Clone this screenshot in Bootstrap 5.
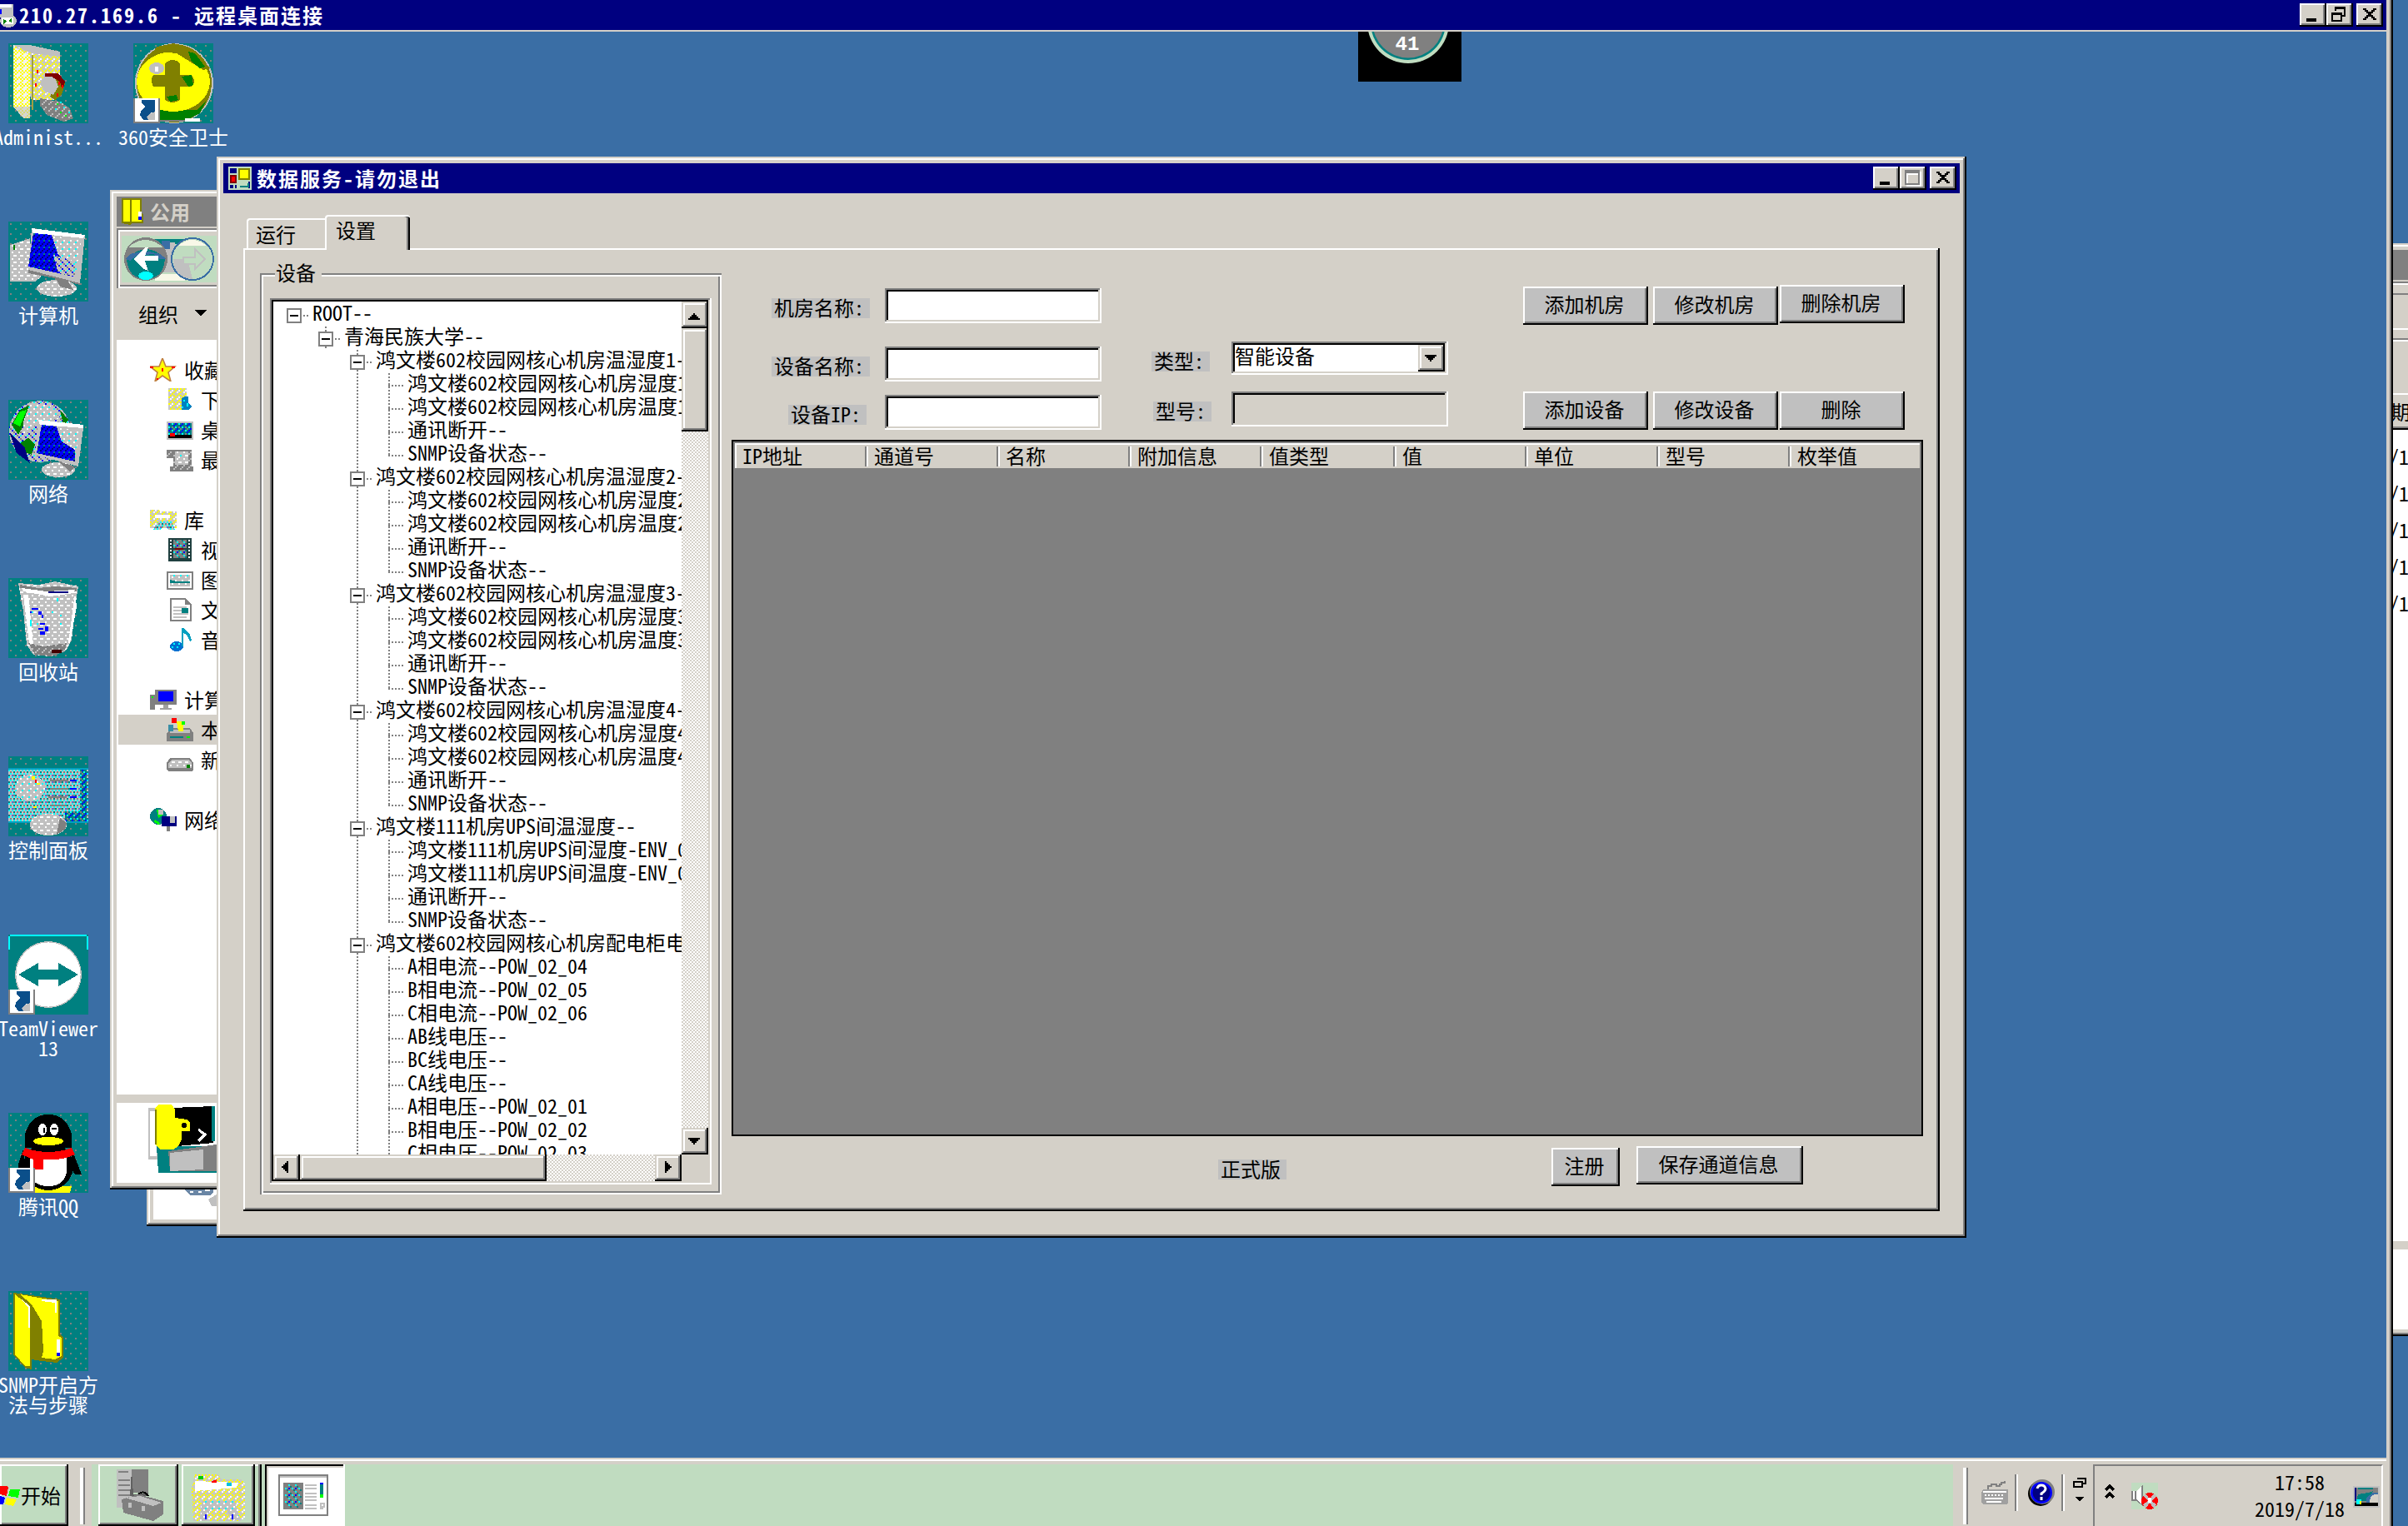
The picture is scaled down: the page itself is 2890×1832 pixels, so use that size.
<!DOCTYPE html>
<html lang="zh-CN">
<head>
<meta charset="utf-8">
<title>210.27.169.6 - 远程桌面连接</title>
<link rel="stylesheet" href="https://cdn.jsdelivr.net/npm/bootstrap@5.3.0/dist/css/bootstrap.min.css">
<script src="https://cdn.jsdelivr.net/npm/bootstrap@5.3.0/dist/js/bootstrap.bundle.min.js"></script>
<style>
:root{--face:#d4d0c8;--desk:#3a6ea5;--navy:#000080;--gr:#808080;--mint:#c0dcc0}
html,body{width:2890px;height:1832px;overflow:hidden}
body{background:var(--desk);color:#000;font:24px/24px "Noto Sans CJK SC",sans-serif;font-feature-settings:"hwid";position:relative}
svg{display:block;flex:none}
.px{shape-rendering:crispEdges}
.abs{position:absolute}
.clip{overflow:hidden;white-space:nowrap}
.face{background:var(--face)}
/* classic 3D edges */
.e-win{background:var(--face);box-shadow:inset -2px -2px #000,inset 2px 2px var(--face),inset -4px -4px var(--gr),inset 4px 4px #fff}
.e-btn{background:var(--face);box-shadow:inset -2px -2px #000,inset 2px 2px #fff,inset -4px -4px var(--gr);border:0;border-radius:0;padding:0;font:inherit;color:#000;line-height:24px}
.e-sb{background:var(--face);box-shadow:inset -2px -2px #000,inset 2px 2px var(--face),inset -4px -4px var(--gr),inset 4px 4px #fff}
.e-sunk{background:#fff;box-shadow:inset -2px -2px #fff,inset 2px 2px var(--gr),inset -4px -4px var(--face),inset 4px 4px #000}
.tbar{background:var(--navy);color:#fff;font-weight:700;letter-spacing:2px;height:36px}
.capbtn{width:32px;height:28px}
/* remote frame */
.frame{width:2872px;height:1832px;background:var(--desk);border-right:2px solid #000;box-shadow:inset -2px 0 var(--gr);padding-right:2px;position:relative;z-index:1}
.framein{border-right:4px solid var(--face);height:1832px}
.topbar{border-bottom:2px solid var(--face);height:38px;padding:0 4px 0 0;flex:none}
.deskarea{min-height:0;padding:14px 0 0 10px}
.dicon{width:96px;color:#fff;text-align:center;height:214px;flex:none}
.dicon div{margin:4px -30px 0;line-height:24px;white-space:nowrap}
/* stray window at the far right */
.stray{left:2872px;top:292px;width:18px;height:1312px}
.stray .ln{height:44px;line-height:44px;margin-left:-5px}
/* explorer */
.exp{left:132px;top:228px;width:300px;height:1200px;padding:8px}
.navbox{height:72px;margin-top:2px;padding:6px;box-shadow:inset 2px 2px var(--gr),inset 4px 4px #fff,inset 0 -2px #fff,inset 0 -4px var(--gr)}
.li1,.li2{height:36px;display:flex;align-items:center;padding-left:40px;line-height:22px}
.li1 svg,.li2 svg{width:32px;height:28px;margin-right:9px}
.li2{padding-left:60px}
.li2.sel{background:var(--face);margin-left:2px;padding-left:58px}
/* service window */
.svc{left:260px;top:188px;width:2100px;height:1298px;padding:8px}
.tab1{width:94px;height:36px;margin-left:4px;border:2px solid #fff;border-bottom:0;border-radius:4px 0 0 0;padding:5px 0 0 9px;border-right:0}
.tab2{width:102px;height:42px;margin-bottom:-2px;background:var(--face);border-left:2px solid #fff;border-top:2px solid #fff;border-radius:4px 4px 0 0;box-shadow:inset -2px 0 #000,inset -4px 0 var(--gr);padding:4px 0 0 11px;position:relative}
.tpage{width:2036px;height:1156px;box-shadow:inset -2px -2px #000,inset 2px 2px #fff,inset -4px -4px var(--gr)}
.gbox{width:554px;height:1106px;margin:30px 0 0 20px;padding:0 12px;box-shadow:inset 2px 2px var(--gr),inset -2px -2px #fff,inset 4px 4px #fff,inset -4px -4px var(--gr)}
.glabel{width:56px;height:24px;margin:-12px 0 18px 6px;padding-left:1px;line-height:22px;background:var(--face)}
.tree{width:530px;height:1064px;padding:4px}
.rows{width:490px;height:1024px;overflow:hidden;padding-top:2px;background:#fff}
.r{height:28px;display:flex;white-space:nowrap;line-height:22px;position:relative}
.r1{padding-left:38px;background:linear-gradient(var(--gr) 50%,transparent 50%) 62px 0/2px 4px repeat-y}
.r2{padding-left:76px}.r3{padding-left:138px}
.r2,.r3{background:linear-gradient(var(--gr) 50%,transparent 50%) 100px 0/2px 4px repeat-y}
.bx{width:18px;height:18px;border:2px solid var(--gr);margin:6px 0 0 16px;background:linear-gradient(#000,#000) center/10px 2px no-repeat #fff;flex:none}
.dt{width:6px;height:2px;margin:14px 5px 0 2px;background:linear-gradient(90deg,var(--gr) 50%,transparent 50%) 0 0/4px 2px;flex:none}
.arm{width:18px;height:28px;margin-right:5px;flex:none;background:linear-gradient(var(--gr) 50%,transparent 50%) 0 0/2px 4px repeat-y}
.arm::after{content:"";display:block;margin-top:14px;height:2px;width:18px;background:linear-gradient(90deg,var(--gr) 50%,transparent 50%) 0 0/4px 2px}
.end .arm{height:16px}
.dith{background:repeating-conic-gradient(#fff 0 25%,var(--face) 0 50%) 0 0/4px 4px}
.s32{width:32px;height:32px}
.fl{background:#c0c0c0;height:24px;padding-left:3px;line-height:22px;white-space:nowrap}
.fin{width:260px;height:42px;border:0;border-radius:0}
.bt{background:#c0c0c0;width:150px;height:46px;padding:0 3px 4px 0}
.dgrid{width:1430px;height:836px;background:var(--gr);border:2px solid #000;padding:2px 0 0 2px}
.dhead{width:1422px;height:30px;background:var(--face);box-shadow:inset 2px 2px #fff}
.dhead div{width:158px;height:24px;margin-top:4px;line-height:22px;padding-left:9px;position:relative;box-shadow:inset -2px 0 var(--gr),2px 0 #fff}
.dhead div:nth-child(5){width:160px}
.dhead div:last-child{box-shadow:none;width:156px}
/* taskbar */
.task{height:82px;flex:none;background:var(--face);box-shadow:inset 0 2px var(--face),inset 0 4px #fff;padding-top:8px;padding-right:4px}
.tb{background:var(--mint);height:74px}
.grip{width:6px;height:68px;background:#fff;border-right:2px solid var(--gr);margin-top:4px}
.sep{width:4px;height:44px;border-left:2px solid var(--gr);border-right:2px solid #fff;margin-top:12px}
.tray{width:348px;height:74px;border-top:2px solid var(--gr);border-left:2px solid var(--gr);border-right:2px solid #fff}
.clock{width:108px;padding-top:3px;margin-right:10px;line-height:32px}
</style>
</head>
<body>
<svg width="0" height="0" class="abs"><defs>
<pattern id="tl" width="6" height="6" patternUnits="userSpaceOnUse"><rect width="6" height="6" fill="#008080"/><rect x="1" y="1" width="1" height="1" fill="#808080"/><rect x="4" y="4" width="1" height="1" fill="#808080"/></pattern>
<pattern id="yw" width="4" height="4" patternUnits="userSpaceOnUse"><rect width="4" height="4" fill="#f4f4ec"/><path d="M0 0h1v1H0zM2 0h1v1H2zM1 1h1v1H1zM3 1h1v1H3zM0 2h1v1H0zM3 3h1v1H3z" fill="#ff0"/></pattern>
<pattern id="ys" width="4" height="4" patternUnits="userSpaceOnUse"><rect width="4" height="4" fill="#c8c8c4"/><path d="M0 0h1v1H0zM2 0h1v1H2zM1 1h1v1H1zM0 2h1v1H0zM3 3h1v1H3z" fill="#ff0"/><path d="M2 2h1v1H2zM3 1h1v1H3z" fill="#fff"/></pattern>
<pattern id="ws" width="4" height="4" patternUnits="userSpaceOnUse"><rect width="4" height="4" fill="#c0c0c0"/><path d="M0 0h1v1H0zM2 2h1v1H2zM3 0h1v1H3z" fill="#fff"/></pattern>
<pattern id="bn" width="3" height="4" patternUnits="userSpaceOnUse"><rect width="3" height="4" fill="#00f"/><path d="M0 0h1v1H0zM2 1h1v1H2zM1 2h1v1H1z" fill="#000080"/><path d="M0 3h1v1H0z" fill="#008080"/></pattern>
<pattern id="cs" width="4" height="4" patternUnits="userSpaceOnUse"><rect width="4" height="4" fill="#c0c0c0"/><path d="M0 0h1v1H0z" fill="#0ff"/><path d="M1 3h1v1H1zM3 1h1v1H3z" fill="#fff"/></pattern>
<pattern id="cb" width="4" height="4" patternUnits="userSpaceOnUse"><rect width="4" height="4" fill="#c0c0c0"/><path d="M0 0h1v1H0zM2 2h1v1H2z" fill="#00f"/><path d="M1 1h1v1H1zM3 3h1v1H3z" fill="#808080"/><path d="M3 1h1v1H3z" fill="#0ff"/></pattern>
<pattern id="tc" width="4" height="4" patternUnits="userSpaceOnUse"><rect width="4" height="4" fill="#808080"/><path d="M0 0h1v1H0zM2 2h1v1H2z" fill="#0ff"/><path d="M1 1h1v1H1zM3 3h1v1H3z" fill="#008080"/><path d="M2 0h1v1H2z" fill="#00f"/></pattern>
<pattern id="cp" width="4" height="4" patternUnits="userSpaceOnUse"><rect width="4" height="4" fill="#c0c0c0"/><path d="M0 0h1v1H0zM2 0h1v1H2zM1 2h1v1H1zM3 2h1v1H3z" fill="#0ff"/><path d="M1 1h1v1H1zM3 3h1v1H3z" fill="#808080"/><path d="M3 1h1v1H3zM0 3h1v1H0z" fill="#008080"/><path d="M2 3h1v1H2z" fill="#66c"/></pattern>
<pattern id="bd" width="4" height="4" patternUnits="userSpaceOnUse"><rect width="4" height="4" fill="#008080"/><path d="M0 0h1v1H0zM2 2h1v1H2zM1 3h1v1H1z" fill="#00f"/><path d="M1 1h1v1H1zM3 3h1v1H3z" fill="#0ff"/><path d="M3 1h1v1H3zM0 2h1v1H0z" fill="#808080"/></pattern>
<pattern id="gd" width="4" height="4" patternUnits="userSpaceOnUse"><rect width="4" height="4" fill="#808080"/><path d="M0 0h1v1H0zM2 2h1v1H2zM1 3h1v1H1z" fill="#c0c0c0"/></pattern>
<g id="cut"><rect y="33" width="16" height="15" fill="#808080"/><rect x="1" y="33" width="14" height="14" fill="#fff"/><path d="M5 34h8v8h-2v-1l-2 2 0 3H6l-2-3 1-3 2-2-2-2z" fill="#0b4f8a"/><path d="M13 41l-3 1-2 2 1 2h4z" fill="#c0c0c0"/></g>
</defs></svg>

<!-- window of the local desktop, seen past the remote frame -->
<div class="abs stray face clip">
  <div style="height:8px;border-top:2px solid var(--face);box-shadow:inset 0 2px #fff"></div>
  <div style="height:36px;background:var(--gr)"></div>
  <div style="height:16px;background:linear-gradient(var(--face) 2px,var(--gr) 2px 4px,#fff 4px 6px,var(--face) 6px)"></div>
  <div style="height:58px;background:linear-gradient(var(--gr) 2px,var(--face) 2px 42px,#fff 42px 44px,var(--face) 44px 54px,var(--gr) 54px 56px,#fff 56px)"></div>
  <div style="height:62px"></div>
  <div style="height:44px;border-top:2px solid #fff;box-shadow:inset 0 -2px #000,inset 0 -4px var(--gr);padding-top:8px"><span style="margin-left:-3px">期</span></div>
  <div class="bg-white" style="height:974px;padding-top:10px"><div class="ln">/1</div><div class="ln">/1</div><div class="ln">/1</div><div class="ln">/1</div><div class="ln">/1</div></div>
  <div style="height:10px"></div>
  <div class="bg-white" style="height:96px"></div>
  <div style="height:8px;box-shadow:inset 0 -2px #000,inset 0 -4px var(--gr)"></div>
</div>

<div class="frame"><div class="framein d-flex flex-column">
  <header class="tbar topbar d-flex align-items-center">
    <svg class="px" width="20" height="30" viewBox="0 0 10 15"><path d="M0 1h8v8H0z" fill="#c0c0c0"/><path d="M0 1h7v2H0z" fill="#fff"/><path d="M0 4h1v3H0z" fill="#00f"/><ellipse cx="5" cy="11" rx="5" ry="4" fill="#c0c0c0"/><path d="M1 9h7v4H1z" fill="#fff"/><path d="M2 10l2 1-2 2zM7 9L5 11l2 1z" fill="#008000"/></svg>
    <span style="margin-left:3px">210.27.169.6 - 远程桌面连接</span>
    <div class="ms-auto d-flex">
      <div class="e-btn capbtn"><svg class="px" width="32" height="28"><path d="M8 18h12v4H8z"/></svg></div>
      <div class="e-btn capbtn"><svg class="px" width="32" height="28" fill="none" stroke="#000" stroke-width="2"><path d="M11 9V6h11v9h-4M11 4v4M10 5h13"/><path d="M7 12h11v9H7zM6 13h13"/></svg></div>
      <div class="e-btn capbtn ms-1"><svg class="px" width="32" height="28"><path d="M8 6h4v2h2v2h4V8h2V6h4v2h-2v2h-2v2h-2v2h2v2h2v2h2v2h-4v-2h-2v-2h-4v2h-2v2H8v-2h2v-2h2v-2h2v-2h-2v-2h-2V8H8z"/></svg></div>
    </div>
  </header>

  <main class="flex-grow-1 d-flex deskarea">
    <section class="d-flex flex-column" style="width:150px">
      <div class="dicon">
        <svg class="px" width="96" height="96" viewBox="0 0 48 48"><rect width="48" height="48" fill="url(#tl)"/><path d="M3 1L31 5V22L28 34H14z" fill="url(#ys)"/><path d="M3 1h10l18 4v3L14 6z" fill="#c0c0c0"/><path d="M3 2L13 7V45L9 45 3 38z" fill="url(#yw)"/><path d="M14 7h1v33h-1z" fill="#a0a040"/><path d="M3 38l6 7h4v-7z" fill="#c0c0c0" opacity=".6"/><path d="M25 18l6 1 3 5-2 7-4 3-3-2 4-7-4-5z" fill="#808000"/><path d="M22 19l6 1 2 6-3 5-5-2-3-5z" fill="#c0c0c0"/><path d="M22 18l8 0 4 5-1 4-1 0-1-4-5-3h-4z" fill="#800000"/><path d="M30 23h1v2h-1zM32 25h1v2h-1zM29 30h1v2h-1zM17 16h1v2h-1zM16 24h1v2h-1z" fill="red"/><path d="M19 33l5 1 7 1 6 4 2 6-6 2-10-4-4-6z" fill="url(#gd)"/><path d="M31 35h1v1h-1zM33 38h1v1h-1zM36 41h1v1h-1zM28 39h1v1h-1z" fill="#0ff"/><path d="M29 36h1v1h-1zM34 43h1v1h-1zM31 41h1v1h-1z" fill="#0f0"/></svg>
        <div>Administ...</div></div>
      <div class="dicon">
        <svg class="px" width="96" height="96" viewBox="0 0 48 48"><rect width="48" height="48" fill="url(#tl)"/><path d="M1 14L13 10V28l7 5-4 3H1z" fill="url(#ws)"/><path d="M3 14h1v3H3z" fill="#008000"/><path d="M14 4L46 8 43 37 12 29z" fill="#c0c0c0"/><path d="M14 4L46 8l-1 2-30-3z" fill="#fff"/><path d="M15 7L44 11 40 33 12 27z" fill="url(#cs)"/><path d="M15 7l11 1 4 12 10 8-1 5-27-6z" fill="url(#bn)"/><path d="M27 20l13 4v9l-10-2z" fill="url(#cb)"/><path d="M12 29l31 8v1L28 34 12 31z" fill="#808080"/><ellipse cx="29" cy="40" rx="12" ry="5" fill="url(#ws)"/><path d="M28 33l8 3 3 5-8-2z" fill="#808080"/></svg>
        <div>计算机</div></div>
      <div class="dicon">
        <svg class="px" width="96" height="96" viewBox="0 0 48 48"><rect width="48" height="48" fill="url(#tl)"/><circle cx="19" cy="19" r="18.500" fill="url(#cb)"/><path d="M2 15l5-9 8-4-4 10-5 9zM7 26l5-3 4 4-2 6-6-2zM31 6l5 6-3 3z" fill="#008000"/><path d="M3 14l4-7 4-1-4 10z" fill="#0f0"/><path d="M1 20l4 12 8 6-3-9-5-5z" fill="#000080"/><path d="M13 2l12 1 6 8-14 3-8 8 0-9z" fill="url(#cs)"/><path d="M18 12L45 17 42 40 16 33z" fill="#c0c0c0"/><path d="M18 12l27 3v2L19 15z" fill="#fff"/><path d="M20 15L43 19 40 36 17 31z" fill="url(#cs)"/><path d="M20 15l9 1 3 9 8 5v7l-23-5z" fill="url(#bn)"/><ellipse cx="30" cy="42" rx="10" ry="4.500" fill="url(#ws)"/><path d="M30 37l10 3-3 3z" fill="#808080"/></svg>
        <div>网络</div></div>
      <div class="dicon">
        <svg class="px" width="96" height="96" viewBox="0 0 48 48"><rect width="48" height="48" fill="url(#tl)"/><path d="M6 3l12 1 10-2 14 3-1 6-3 26-3 6-10 4-10-1-4-6L9 20z" fill="url(#ws)"/><path d="M7 4l11 2 10-1 13 1v2l-14 1L7 6z" fill="#808080"/><path d="M8 6l15 2 17-1-1 2-14 2L9 8z" fill="#fff"/><path d="M24 8h12v1H24z" fill="#000080"/><path d="M9 10l3 25 1 6 2-1L12 10zM40 9l-4 30h1l4-22z" fill="#fff"/><path d="M14 18h4v1h-4zM13 20h1v1h-1zM18 20h2v2h-2zM20 22h1v2h-1zM19 27h3v1h-3zM18 30h3v1h-3zM22 29h2v3h-2zM19 32h3v2h-3z" fill="#00f"/><path d="M14 20h1v1h-1zM13 25h1v4h-1zM17 27h1v1h-1zM29 12h1v2h-1zM26 20h1v1h-1zM31 27h1v1h-1zM31 22h1v1h-1z" fill="#0ff"/><path d="M12 39l9 2 14-2-1 5-8 3-10-1z" fill="url(#gd)"/><path d="M26 43h6v2h-6z" fill="#400"/></svg>
        <div>回收站</div></div>
      <div class="dicon">
        <svg class="px" width="96" height="96" viewBox="0 0 48 48"><rect width="48" height="48" fill="url(#tl)"/><path d="M0 7h48v33H0z" fill="url(#cp)"/><path d="M0 7h48v1H0zM0 39h48v1H0z" fill="#00a0c0"/><path d="M43 8h4v31H34v-6h9z" fill="url(#bd)"/><ellipse cx="13" cy="19" rx="9" ry="8" fill="url(#cs)"/><path d="M25 14h11v1H25zM25 19h11v1H25zM24 24h11v1H24zM25 29h10v1H25z" fill="#808080"/><path d="M37 14h4v1h-4zM37 19h4v1h-4zM37 24h4v1h-4z" fill="#00f"/><path d="M14 12h2v2h-2zM17 16h2v1h-2zM15 30h2v1h-2z" fill="#ff0"/><path d="M16 14h1v2h-1z" fill="red"/><ellipse cx="24" cy="41" rx="11" ry="6.500" fill="url(#ws)"/><path d="M31 37l4 3-1 4-5 3z" fill="#808080"/></svg>
        <div>控制面板</div></div>
      <div class="dicon">
        <svg class="px" width="96" height="96" viewBox="0 0 48 48"><rect width="48" height="48" fill="#008080"/><path d="M1 0h46v1H1zM0 1h1v8H0zM47 1h1v8h-1z" fill="#0ff"/><circle cx="24" cy="24" r="20" fill="#c0c0c0"/><circle cx="24" cy="24" r="19.300" fill="#fff"/><path d="M6 24l12-7v4h12v-4l12 7-12 7v-4H18v4z" fill="#008080"/><use href="#cut"/></svg>
        <div>TeamViewer<br>13</div></div>
      <div class="dicon">
        <svg class="px" width="96" height="96" viewBox="0 0 48 48"><rect width="48" height="48" fill="url(#tl)"/><path d="M14 44h24l-1 4H15z" fill="#ff0"/><path d="M9 22l-3 9v5l4-3zM39 24l5 13-4 0-4-6z" fill="#000"/><ellipse cx="24" cy="32" rx="15" ry="14.500" fill="#000"/><path d="M10 21V13Q13 1 24 1T38 13v8z" fill="#000"/><path d="M13 27h22v8q-1 9-11 9T13 35z" fill="#fff"/><path d="M10 21q14 5 28 0l2 4q-6 3-14 3l-5 0v6h-6v-6l-7-3z" fill="red"/><ellipse cx="20.500" cy="10" rx="2.500" ry="3.500" fill="#fff"/><ellipse cx="27.500" cy="10" rx="2.500" ry="3.500" fill="#fff"/><path d="M21 9h1v3h-1zM26 9h3v1h-3z" fill="#000"/><ellipse cx="24" cy="17" rx="9" ry="2.500" fill="#ff0"/><use href="#cut"/></svg>
        <div>腾讯QQ</div></div>
      <div class="dicon">
        <svg class="px" width="96" height="96" viewBox="0 0 48 48"><rect width="48" height="48" fill="url(#tl)"/><path d="M3 1L31 5V26l2 2v12l-4 3-9-1-6-1v6L10 46 3 38z" fill="#808000"/><path d="M7 2l23 4v21l2 1v11l-4 2-8-1 1-4-1-18-6-10z" fill="#ff0"/><path d="M4 2l9 7v36l-3 0L4 38z" fill="#ff0"/><path d="M13 8l5 7 2 11v10l-5 4h-1z" fill="#808000"/><path d="M20 5h9v8h-1V7l-8-1zM8 5l5 4v13h-1V10zM29 29h2v8h-2z" fill="#fff"/><path d="M29 37h2v2h-2z" fill="#00f"/></svg>
        <div>SNMP开启方<br>法与步骤</div></div>
    </section>
    <section>
      <div class="dicon">
        <svg class="px" width="96" height="96" viewBox="0 0 48 48"><rect width="48" height="48" fill="url(#tl)"/><ellipse cx="24.500" cy="24" rx="23.500" ry="24" fill="#c0c0c0"/><ellipse cx="24.500" cy="24" rx="22.500" ry="23.500" fill="#808000"/><path d="M16 38l8 2h14l6-6-4 8-8 4H16z" fill="#008000"/><ellipse cx="24" cy="23" rx="22" ry="18" fill="#ff0"/><path d="M14 2l10-2 12 4 10 11-4 1-8-5-8-5-10-1-6 3z" fill="#808000"/><path d="M33 5l4 1 6 8-3 1-5-4z" fill="#008000"/><ellipse cx="14" cy="15" rx="4.500" ry="3.500" fill="#c0c0c0"/><path d="M13 14h2v3h-2z" fill="#fff"/><path d="M19 12q5-4 9 0v7h7q3 4 0 7h-7v8q-4 3-9 0v-8h-7q-2-4 0-7h7z" fill="#808000"/><path d="M29 20l6-1 1 6-3 1zM20 32l6-1 1 3-5 1z" fill="#008000"/><path d="M16 46h24v1H16z" fill="#808080"/><path d="M31 45h9v2h-9z" fill="#fff"/><use href="#cut"/></svg>
        <div>360安全卫士</div></div>
    </section>
  </main>

  <footer class="task d-flex">
    <div class="tb e-btn d-flex align-items-center" style="width:82px;background:var(--mint)">
      <svg class="px" width="26" height="26" viewBox="0 0 13 13"><path d="M0 1h4l1 1-1 5-4-1z" fill="red"/><path d="M6 3l6 0-1 5-6-1z" fill="#0f0"/><path d="M0 7l3 1-1 4-2 0z" fill="#00f"/><path d="M4 8l6 1-2 4-5-1z" fill="#ff0"/></svg><span style="margin-left:-1px">开始</span></div>
    <div class="grip" style="margin-left:14px;margin-right:8px"></div>
    <div class="d-flex flex-grow-1" style="background:var(--mint);padding-left:8px">
      <div class="tb e-btn" style="width:96px;background:var(--mint);padding:6px 0 0 22px"><svg class="px" width="56" height="62" viewBox="0 0 28 31"><path d="M0 0h9v23H0z" fill="#c0c0c0"/><path d="M1 1h6v1H1zM1 6h7v1H1zM1 9h7v1H1zM1 12h7v1H1zM1 15h7v1H1zM9 0h10v14H9z" fill="#808080"/><path d="M9 1l1 14 9-1 0 2H8z" fill="#606060"/><path d="M3 18l10-3 15 4v8l-6 4L4 26z" fill="#808080"/><path d="M5 17l9-1 13 4-5 2z" fill="#c0c0c0"/><path d="M13 15q3-3 6 1" stroke="#000" fill="none"/><path d="M7 20h2v3H7zM15 22h2v3h-2z" fill="#c0c0c0"/></svg></div>
      <div class="tb e-btn" style="width:88px;margin-left:4px;background:var(--mint);padding:12px 0 0 12px"><svg class="px" width="66" height="58" viewBox="0 0 33 29"><path d="M2 0h14l2 3h12l2 3v20l-3 2H1L0 8z" fill="url(#ys)"/><path d="M2 4l26 1-1 3-25 2z" fill="#fff"/><path d="M4 1h3v2H4z" fill="#0c0"/><path d="M12 4l3-1v2h-3z" fill="red"/><path d="M21 5h3v2h-3z" fill="#00c0e0"/><path d="M6 16h20l3 11-5 1-3-7H11l-2 7H5z" fill="url(#cs)"/><path d="M8 24h1v3H8zM24 24h1v3h-1z" fill="#00f"/></svg></div>
      <div class="tb" style="width:8px;box-shadow:inset -2px 0 #000,inset -4px 0 var(--gr),inset 0 2px #fff"></div>
      <div class="tb" style="width:96px;margin-left:4px;background:#fff;box-shadow:inset -2px 0 #fff,inset 2px 2px #000,inset 4px 4px var(--face);padding:12px 0 0 16px"><svg class="px" width="60" height="50" viewBox="0 0 30 25"><path d="M0 0h30v25H0z" fill="#808080"/><path d="M1 1h28v23H1z" fill="#fff"/><path d="M1 1h28v1H1z" fill="url(#ws)"/><path d="M3 5h12v16H3z" fill="#808080"/><path d="M4 6h10v14H4z" fill="url(#tc)"/><path d="M16 6h7v1h-7zM16 8h7v1h-7zM16 11h7v1h-7zM16 13h7v1h-7zM16 15h7v1h-7zM16 18h7v1h-7zM16 20h7v1h-7z" fill="#c0c0c0"/><path d="M25 5h2v9h-2z" fill="#008080"/><path d="M25 5h2v1h-2z" fill="#00f"/><path d="M25 12h2v2h-2z" fill="#0f0"/><path d="M25 17h3v4h-3z" fill="url(#ws)"/></svg></div>
    </div>
    <div class="grip" style="margin-left:12px"></div>
    <svg class="px" style="margin:20px 8px 0 16px" width="32" height="28" viewBox="0 0 16 14"><path d="M4 5V3h2V2h3v1h2V2h1V1h2V0" stroke="#808080" fill="none"/><path d="M1 5h15v8l-1 1H1l-1-1V7z" fill="#a0a0a0"/><path d="M1 6h14v1H1zM2 8h1v1H2zM4 8h1v1H4zM6 8h1v1H6zM8 8h1v1H8zM10 8h1v1h-1zM12 8h1v1h-1zM2 10h11v1H2zM3 12h9v1H3z" fill="#fff"/></svg>
    <div class="sep"></div>
    <svg style="margin:17px 8px 0 12px" width="32" height="33" viewBox="0 0 32 33"><circle cx="15" cy="18" r="15" fill="#000"/><circle cx="17" cy="16" r="15" fill="#808080"/><circle cx="16" cy="17" r="13" fill="#00f"/><circle cx="16" cy="17" r="10.500" fill="#000080"/><path d="M11 12q1-4 5-4t5 4q0 3-5 6v2M16 22v4" fill="none" stroke="#fff" stroke-width="3"/></svg>
    <div class="sep"></div>
    <svg class="px" style="margin:16px 8px 0 10px" width="16" height="32"><path d="M5 1h10v6h-4M1 5h10v6H1z" fill="none" stroke="#000" stroke-width="2"/><path d="M3 23h10l-5 6z"/></svg>
    <div class="tray d-flex">
      <svg class="px" style="margin:22px 0 0 12px" width="12" height="18" fill="none" stroke="#000" stroke-width="3"><path d="M1 7l5-5 5 5M1 16l5-5 5 5"/></svg>
      <svg class="px" style="margin:20px 0 0 20px" width="32" height="32" viewBox="0 0 16 16"><rect width="16" height="16" fill="#c0dcc0"/><path d="M0 5h3l4-4v13l-4-3H0z" fill="#808080"/><path d="M1 5h1v5H1zM3 5l3-3v11l-3-3z" fill="#fff"/><circle cx="11" cy="11" r="5" fill="red"/><path d="M8 7h1l2 3 2-3h1l1 1-3 3 3 2-1 2h-1l-2-3-2 3H8l-1-2 3-2-3-3z" fill="#c0c0c0"/><path d="M10 9h2v3h-2z" fill="#fff"/></svg>
      <div class="ms-auto text-center clock">17:58<br>2019/7/18</div>
      <svg class="px" style="margin:24px 2px 0 0" width="32" height="26" viewBox="0 0 16 13"><path d="M0 0h16v13H0z" fill="#c0c0c0"/><path d="M1 1h14v11H1z" fill="#808080"/><path d="M1 1h1v8H1z" fill="#000080"/><path d="M3 1h9v1H3zM2 9l1-4 6-1 3-1-3 6z" fill="#008080"/><path d="M8 10V7l4-3h3v6z" fill="#3a6ea5"/><path d="M10 9l1-3 2-1h2v5h-5z" fill="#d4d0c8"/><path d="M1 10h14v2H1z"/><path d="M2 8h3v3H2z" fill="#0ff"/><path d="M4 9h1v2H4z" fill="#ff0"/></svg>
    </div>
  </footer>
</div>

<!-- gauge widget -->
<svg class="abs" style="left:1630px;top:38px" width="124" height="60"><rect width="124" height="60" fill="#000"/><circle cx="60" cy="-11" r="49" fill="#c0dcc0"/><circle cx="60" cy="-11" r="45" fill="#008080"/><circle cx="60" cy="-11" r="42.500" fill="#808080"/><text x="59" y="22" text-anchor="middle" font-size="24" font-weight="700" fill="#fff" font-family="Liberation Mono">41</text></svg>

<!-- second explorer window, lowest -->
<div class="abs e-win" style="left:176px;top:1400px;width:300px;height:72px;padding:8px"><div class="bg-white" style="height:56px"><svg class="px" style="margin-left:36px" width="40" height="48"><path d="M2 20h34v3l-4 4H8z" fill="#6a86a5"/><path d="M8 22h4v2H8zM18 22h4v2h-4zM26 20h6v2h-6z" fill="#fff"/><path d="M30 32l10-6v14h-6z" fill="#c0c0c0"/></svg></div></div>

<!-- explorer window -->
<div class="abs e-win exp">
  <div class="d-flex align-items-center" style="height:36px;background:var(--gr);color:var(--face);font-weight:700;padding-left:6px;line-height:22px">
    <svg class="px" width="26" height="32" viewBox="0 0 13 16"><path d="M0 0h12v9l1 1v5H6l-1 1L0 15z" fill="#808000"/><path d="M1 1h4v13H1zM6 1h5v9l1 1v3H6z" fill="#ff0"/><path d="M10 8h2v3h-2z" fill="#fff"/><path d="M10 11h2v2h-2z" fill="#00f"/></svg>
    <span class="ms-2">公用</span></div>
  <div class="navbox"><svg class="px" style="margin-top:3px" width="116" height="56" viewBox="0 0 58 28"><rect width="58" height="28" fill="#c0dcc0"/><path d="M18 2h20v3H18z" fill="#008080"/><path d="M24 4h8v18h-8z" fill="#c0c0c0"/><path d="M24 3h5v5h-5z" fill="#3a6ea5"/><path d="M20 23h18v4H20z" fill="#f8f8e8"/><circle cx="14.500" cy="14" r="13" fill="#808080"/><path d="M4 7q10-9 21 0z" fill="#c0dcc0"/><path d="M3 14q12-12 23 0-1 12-11.500 12T3 14z" fill="#008080"/><path d="M2 14l3-3 9-2 9 2 4 3h-4l-4-3-10 1-4 3z" fill="#3a6ea5"/><path d="M7 14l7-7h2l-2 5h8v3h-8l2 6-3-1z" fill="#fff"/><ellipse cx="14.500" cy="24" rx="4.500" ry="2.500" fill="#0ff"/><circle cx="42.500" cy="14" r="12.500" fill="#c0dcc0" stroke="#3a6ea5"/><path d="M31 14q0 11 11.500 12l-3-12z" fill="#c0c0c0"/><path d="M34 6q8-7 17 0z" fill="#f8f8e8"/><path d="M37 13h7V8l6 6-6 6v-3h-7z" fill="#c0dcc0" stroke="#c0c0c0"/></svg></div>
  <div class="d-flex align-items-center" style="height:62px;padding-left:26px;line-height:22px"><span>组织</span><svg class="px ms-3" width="20" height="10"><path d="M4 0h14l-7 8z"/></svg></div>
  <div class="bg-white clip" style="height:906px;padding-top:18px">
    <div class="li1"><svg viewBox="0 0 16 14"><path d="M7.500 0l2 5H15l-4 3.500 1.500 5.500-5-3.500L3 14l1.500-5.500L0 5h5.500z" fill="#ff0" stroke="#c08040" stroke-width=".8"/><path d="M0 5h2v1H0zM13 5h2v1h-2zM7 6h1v2H7zM4 12h1v1H4z" fill="red"/></svg>收藏夹</div>
    <div class="li2"><svg class="px" viewBox="0 0 16 14"><path d="M1 0h11v13H1z" fill="url(#ys)"/><path d="M9 6l2-1h2v4l2 2-2 2-4 0z" fill="#0080c0"/><path d="M10 7h1v1h-1zM12 9h1v2h-1zM9 11h1v1H9z" fill="#0ff"/></svg>下载</div>
    <div class="li2"><svg class="px" viewBox="0 0 16 14"><path d="M0 2h16v11H0z" fill="#c0c0c0"/><path d="M1 3h14v7H1z" fill="url(#bd)"/><path d="M1 10h14v2H1z" fill="#000"/><path d="M2 9h3v2H2z" fill="red"/></svg>桌面</div>
    <div class="li2"><svg class="px" viewBox="0 0 16 14"><path d="M0 1h15v10h1v3H2v-3h2V6H0z" fill="url(#gd)"/><path d="M5 2h8v8H5z" fill="url(#ws)"/><path d="M7 4h3v3H7z" fill="url(#cs)"/></svg>最近访问的位置</div>
    <div style="height:36px"></div>
    <div class="li1"><svg class="px" viewBox="0 0 16 14"><path d="M0 1h5l1 1h10v10H0z" fill="url(#ys)"/><path d="M3 4h9v2H3z" fill="#fff"/><path d="M2 13l3-5h8l2 5h-4l-2-3-3 3z" fill="url(#cp)"/></svg>库</div>
    <div class="li2"><svg class="px" viewBox="0 0 16 14"><path d="M1 0h14v14H1z" fill="#204040"/><path d="M2 1h1v1H2zM2 3h1v1H2zM2 5h1v1H2zM2 7h1v1H2zM2 9h1v1H2zM2 11h1v1H2zM13 1h1v1h-1zM13 3h1v1h-1zM13 5h1v1h-1zM13 7h1v1h-1zM13 9h1v1h-1zM13 11h1v1h-1z" fill="#fff"/><path d="M4 1h8v5H4zM4 7h8v5H4z" fill="url(#tc)"/><path d="M5 6h5v1H5z" fill="#800000"/></svg>视频</div>
    <div class="li2"><svg class="px" viewBox="0 0 16 14"><path d="M0 2h16v11H0z" fill="#808080"/><path d="M1 3h14v9H1z" fill="#fff"/><path d="M2 4h12v7H2z" fill="url(#cs)"/><path d="M2 7l4 1h8v1H2z" fill="#008080"/></svg>图片</div>
    <div class="li2"><svg class="px" viewBox="0 0 16 14"><path d="M2 0h9l4 4v10H2z" fill="#808080"/><path d="M3 1h8v3h3v9H3z" fill="#fff"/><path d="M4 5h8v1H4zM4 7h5v1H4zM4 9h9v1H4zM4 11h8v1H4z" fill="#c0c0c0"/><path d="M9 6h4v3H9z" fill="#008080"/></svg>文档</div>
    <div class="li2"><svg class="px" viewBox="0 0 16 14"><ellipse cx="6" cy="11" rx="4" ry="3" fill="#0070d0"/><path d="M9 0h1l4 4 1 3-1 1-2-4-2-1v8H9z" fill="#00a0c0"/><path d="M4 9h1v1H4zM6 11h1v1H6zM3 11h1v1H3zM7 9h1v1H7z" fill="#0ff"/></svg>音乐</div>
    <div style="height:36px"></div>
    <div class="li1"><svg class="px" viewBox="0 0 16 14"><path d="M3 1h13v9H3zM0 4h3v9H0z" fill="#808080"/><path d="M5 2h9v6H5z" fill="#00f"/><path d="M1 5h1v1H1z" fill="#0f0"/><path d="M8 10h3v2H8zM6 12h7v1H6z" fill="#a0a0a0"/></svg>计算机</div>
    <div class="li2 sel"><svg class="px" viewBox="0 0 16 14"><path d="M0 9l3-3h11l2 3v5H0z" fill="#808080"/><path d="M2 7h12v2H2z" fill="#c0c0c0"/><path d="M3 0h3v3H3z" fill="red"/><path d="M6 2h4v6H7z" fill="#ff0"/><path d="M1 4h3v4H1z" fill="#3a8ea5"/><path d="M9 2h2v2H9zM12 11h2v1h-2z" fill="#0f0"/><path d="M2 11h8v1H2z" fill="#008080"/></svg>本地磁盘</div>
    <div class="li2"><svg class="px" viewBox="0 0 16 14"><path d="M0 9l2-3h12l2 3v4l-1 1H1l-1-1z" fill="#808080"/><path d="M1 9l2-2h10l2 2v3H1z" fill="url(#ws)"/><path d="M12 10h2v2h-2z" fill="#008000"/></svg>新加卷</div>
    <div style="height:36px"></div>
    <div class="li1"><svg class="px" viewBox="0 0 16 14"><circle cx="5" cy="5" r="5" fill="#008080"/><path d="M4 1l3 0 1 3-3 2zM3 7l3 2-1 1-3-2z" fill="#0f0"/><path d="M5 1h3v3H5z" fill="#c0c0c0"/><path d="M7 5h9v6H7z" fill="#000080"/><path d="M12 5h3v4h-3z" fill="#c0c0c0"/><path d="M10 11h2v3h-2z" fill="#808080"/></svg>网络</div>
  </div>
  <div class="bg-white" style="height:96px;margin-top:10px;padding:2px 0 0 38px"><svg class="px" width="82" height="84" viewBox="0 0 41 42"><path d="M0 2h6v31H0z" fill="#c0c0c0"/><path d="M1 4h4v27H1z" fill="#fff"/><path d="M5 25h36v16H6z" fill="#008080"/><path d="M12 28l29-4v16H13z" fill="#808080"/><path d="M13 29l20-2v12l-20 1z" fill="#c0c0c0"/><path d="M14 2l25-1v22L6 26V10z"/><path d="M38 1h2v21h-2z" fill="#008080"/><path d="M4 2l2-2h8l2 3v5l7 1 2 2v5h-5v5l-2 4-3 2H7l-3-3z" fill="#ff0"/><path d="M4 3h1v21H4z" fill="#808000"/><circle cx="21.500" cy="12.500" r="1.600"/><path d="M30 15l4 3-4 4" stroke="#fff" fill="none" stroke-width="1.500"/></svg></div>
</div>

<!-- service window -->
<div class="abs e-win svc">
  <div class="tbar d-flex align-items-center" style="padding:0 4px 0 6px;line-height:22px">
    <svg class="px" width="28" height="28" viewBox="0 0 14 14"><path d="M0 0h14v14H0z" fill="#c0dcc0"/><path d="M1 1h4v3H1zM1 11h2v2H1zM4 11h1v2H4zM12 9h1v4h-1z" fill="#000080"/><path d="M1 5h4v5H1z" fill="#800000"/><path d="M2 6h2v3H2z" fill="red"/><path d="M6 1h7v7H6z" fill="#808000"/><path d="M7 2h5v5H7z" fill="#ff0"/><path d="M7 12h5v-2" stroke="#008080" fill="none"/></svg>
    <span style="margin-left:6px">数据服务-请勿退出</span>
    <div class="ms-auto d-flex">
      <div class="e-btn capbtn"><svg class="px" width="32" height="28"><path d="M8 18h12v4H8z"/></svg></div>
      <div class="e-btn capbtn"><svg class="px" width="32" height="28"><path d="M8 6h18v18H8z" fill="#fff"/><path d="M6 4h18v18H6z" fill="#808080"/><path d="M8 8h14v12H8z" fill="#fff"/><path d="M10 10h12v10H10z" fill="#d4d0c8"/></svg></div>
      <div class="e-btn capbtn ms-1"><svg class="px" width="32" height="28"><path d="M8 6h4v2h2v2h4V8h2V6h4v2h-2v2h-2v2h-2v2h2v2h2v2h2v2h-4v-2h-2v-2h-4v2h-2v2H8v-2h2v-2h2v-2h2v-2h-2v-2h-2V8H8z"/></svg></div>
    </div>
  </div>
  <div style="padding:26px 24px 0">
    <div class="d-flex align-items-end" style="height:40px"><div class="tab1">运行</div><div class="tab2">设置</div></div>
    <div class="tpage d-flex">
      <div class="gbox">
        <div class="glabel">设备</div>
        <div class="tree e-sunk">
          <div class="d-flex" style="height:1024px">
            <div class="rows">
              <div class="r"><i class="bx"></i><i class="dt"></i>ROOT--</div>
              <div class="r r1"><i class="bx"></i><i class="dt"></i>青海民族大学--</div>
              <div class="r r2"><i class="bx"></i><i class="dt"></i>鸿文楼602校园网核心机房温湿度1--</div>
              <div class="r r3"><i class="arm"></i>鸿文楼602校园网核心机房湿度1--</div>
              <div class="r r3"><i class="arm"></i>鸿文楼602校园网核心机房温度1--</div>
              <div class="r r3"><i class="arm"></i>通讯断开--</div>
              <div class="r r3 end"><i class="arm"></i>SNMP设备状态--</div>
              <div class="r r2"><i class="bx"></i><i class="dt"></i>鸿文楼602校园网核心机房温湿度2--</div>
              <div class="r r3"><i class="arm"></i>鸿文楼602校园网核心机房湿度2--</div>
              <div class="r r3"><i class="arm"></i>鸿文楼602校园网核心机房温度2--</div>
              <div class="r r3"><i class="arm"></i>通讯断开--</div>
              <div class="r r3 end"><i class="arm"></i>SNMP设备状态--</div>
              <div class="r r2"><i class="bx"></i><i class="dt"></i>鸿文楼602校园网核心机房温湿度3--</div>
              <div class="r r3"><i class="arm"></i>鸿文楼602校园网核心机房湿度3--</div>
              <div class="r r3"><i class="arm"></i>鸿文楼602校园网核心机房温度3--</div>
              <div class="r r3"><i class="arm"></i>通讯断开--</div>
              <div class="r r3 end"><i class="arm"></i>SNMP设备状态--</div>
              <div class="r r2"><i class="bx"></i><i class="dt"></i>鸿文楼602校园网核心机房温湿度4--</div>
              <div class="r r3"><i class="arm"></i>鸿文楼602校园网核心机房湿度4--</div>
              <div class="r r3"><i class="arm"></i>鸿文楼602校园网核心机房温度4--</div>
              <div class="r r3"><i class="arm"></i>通讯断开--</div>
              <div class="r r3 end"><i class="arm"></i>SNMP设备状态--</div>
              <div class="r r2"><i class="bx"></i><i class="dt"></i>鸿文楼111机房UPS间温湿度--</div>
              <div class="r r3"><i class="arm"></i>鸿文楼111机房UPS间湿度-ENV_01</div>
              <div class="r r3"><i class="arm"></i>鸿文楼111机房UPS间温度-ENV_02</div>
              <div class="r r3"><i class="arm"></i>通讯断开--</div>
              <div class="r r3 end"><i class="arm"></i>SNMP设备状态--</div>
              <div class="r r2"><i class="bx"></i><i class="dt"></i>鸿文楼602校园网核心机房配电柜电量</div>
              <div class="r r3"><i class="arm"></i>A相电流--POW_02_04</div>
              <div class="r r3"><i class="arm"></i>B相电流--POW_02_05</div>
              <div class="r r3"><i class="arm"></i>C相电流--POW_02_06</div>
              <div class="r r3"><i class="arm"></i>AB线电压--</div>
              <div class="r r3"><i class="arm"></i>BC线电压--</div>
              <div class="r r3"><i class="arm"></i>CA线电压--</div>
              <div class="r r3"><i class="arm"></i>A相电压--POW_02_01</div>
              <div class="r r3"><i class="arm"></i>B相电压--POW_02_02</div>
              <div class="r r3"><i class="arm"></i>C相电压--POW_02_03</div>
            </div>
            <div class="d-flex flex-column dith">
              <div class="s32 e-sb"><svg class="px" width="32" height="32"><path d="M14 14h2v2h2v2h2v2h2v2H8v-2h2v-2h2v-2h2z"/></svg></div>
              <div class="e-sb" style="height:124px"></div>
              <div class="s32 e-sb mt-auto"><svg class="px" width="32" height="32"><path d="M8 12h14v2h-2v2h-2v2h-2v2h-2v-2h-2v-2h-2v-2H8z"/></svg></div>
            </div>
          </div>
          <div class="d-flex face">
            <div class="d-flex dith" style="width:490px">
              <div class="s32 e-sb"><svg class="px" width="32" height="32"><path d="M18 8v14h-2v-2h-2v-2h-2v-2h-2v-2h2v-2h2v-2h2V8z"/></svg></div>
              <div class="e-sb" style="width:296px"></div>
              <div class="s32 e-sb ms-auto"><svg class="px" width="32" height="32"><path d="M12 8v14h2v-2h2v-2h2v-2h2v-2h-2v-2h-2v-2h-2V8z"/></svg></div>
            </div>
          </div>
        </div>
      </div>
      <div style="width:1430px;margin:30px 0 0 12px">
        <div class="d-flex" style="height:200px">
          <div style="padding-top:18px">
            <div class="d-flex"><div style="width:184px;padding:12px 18px 0 48px"><div class="fl">机房名称:</div></div><div class="fin e-sunk"></div></div>
            <div class="d-flex" style="margin-top:28px"><div style="width:184px;padding:12px 18px 0 48px"><div class="fl">设备名称:</div></div><div class="fin e-sunk"></div></div>
            <div class="d-flex" style="margin-top:16px"><div style="width:184px;padding:12px 22px 0 68px"><div class="fl">设备IP:</div></div><div class="fin e-sunk"></div></div>
          </div>
          <div style="padding-top:82px">
            <div class="d-flex"><div style="width:156px;padding:12px 26px 0 60px"><div class="fl">类型:</div></div>
              <div class="fin e-sunk d-flex" style="height:40px;padding:4px 4px 4px 4px;line-height:26px">智能设备<div class="s32 e-sb ms-auto"><svg class="px" width="32" height="32"><path d="M8 12h14v2h-2v2h-2v2h-2v2h-2v-2h-2v-2h-2v-2H8z"/></svg></div></div></div>
            <div class="d-flex" style="margin-top:20px"><div style="width:156px;padding:12px 24px 0 62px"><div class="fl">型号:</div></div><div class="fin e-sunk" style="background:var(--face)"></div></div>
          </div>
          <div style="padding:16px 0 0 90px">
            <div class="d-flex"><button class="e-btn bt">添加机房</button><button class="e-btn bt" style="margin-left:6px">修改机房</button><button class="e-btn bt" style="margin:-2px 0 0 2px">删除机房</button></div>
            <div class="d-flex" style="margin-top:80px"><button class="e-btn bt">添加设备</button><button class="e-btn bt" style="margin-left:6px">修改设备</button><button class="e-btn bt" style="margin-left:2px">删除</button></div>
          </div>
        </div>
        <div class="dgrid"><div class="dhead d-flex"><div>IP地址</div><div>通道号</div><div>名称</div><div>附加信息</div><div>值类型</div><div>值</div><div>单位</div><div>型号</div><div>枚举值</div></div></div>
        <div class="d-flex align-items-start">
          <div class="fl" style="width:82px;margin:28px 0 0 584px">正式版</div>
          <button class="e-btn bt" style="width:82px;margin:14px 0 0 318px">注册</button>
          <button class="e-btn bt" style="width:200px;margin:12px 0 0 20px">保存通道信息</button>
        </div>
      </div>
    </div>
  </div>
</div>
</div>
</body>
</html>
